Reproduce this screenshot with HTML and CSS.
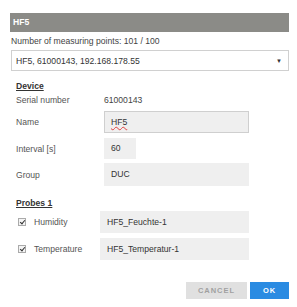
FILE: index.html
```html
<!DOCTYPE html>
<html lang="en">

<head>
    <meta charset="UTF-8">
    <title>HF5</title>
    <link rel="stylesheet" href="styles.css">
</head>

<body>
    <div class="dialog">
        <div class="title">HF5</div>
        <div class="count">Number of measuring points: 101 / 100</div>

        <div class="select">
            <span>HF5, 61000143, 192.168.178.55</span>
            <span class="arrow">&#9660;</span>
        </div>

        <div class="section">
            <h3>Device</h3>
            <div class="row plain">
                <label>Serial number</label>
                <span class="value">61000143</span>
            </div>
            <div class="row name">
                <label>Name</label>
                <div class="field bordered"><span class="spell">HF5</span></div>
            </div>
            <div class="row interval">
                <label>Interval [s]</label>
                <div class="field short">60</div>
            </div>
            <div class="row group">
                <label>Group</label>
                <div class="field">DUC</div>
            </div>

            <h3 class="probes">Probes 1</h3>
            <div class="probe">
                <span class="check"></span>
                <label>Humidity</label>
                <div class="field">HF5_Feuchte-1</div>
            </div>
            <div class="probe">
                <span class="check"></span>
                <label>Temperature</label>
                <div class="field">HF5_Temperatur-1</div>
            </div>
        </div>

        <div class="buttons">
            <button class="cancel">CANCEL</button>
            <button class="ok">OK</button>
        </div>
    </div>
</body>

</html>
```

FILE: styles.css
```css
body {
    margin: 0;
    padding: 13px 0 0 10px;
    font-family: "Liberation Sans", Arial, sans-serif;
    font-size: 8.6px;
    color: #333;
    background: white;
}

.dialog {
    width: 279px;
}

.title {
    height: 19px;
    line-height: 19px;
    background: #8b8b87;
    color: white;
    font-weight: bold;
    padding-left: 3px;
}

.count {
    margin-left: 1px;
    height: 18px;
    line-height: 18px;
    color: #444;
}

.select {
    margin-left: 1px;
    height: 19px;
    border: 1px solid #d0d0d0;
    display: flex;
    align-items: center;
    justify-content: space-between;
    padding: 0 6px 0 4px;
}

.arrow {
    font-size: 6px;
}

.section {
    padding-left: 6px;
}

h3 {
    margin: 9px 0 0 0;
    font-size: 8.6px;
    font-weight: bold;
    text-decoration: underline;
    color: #333;
    height: 13px;
    line-height: 13px;
}

.row {
    display: flex;
    align-items: center;
}

.row.plain {
    height: 14px;
}

.row.name {
    margin-top: 4px;
}

.row.interval {
    margin-top: 5px;
}

.row.group {
    margin-top: 4px;
}

.row label {
    width: 88px;
    color: #555;
}

.value {
    color: #444;
}

.field {
    box-sizing: border-box;
    width: 145px;
    height: 23px;
    line-height: 23px;
    padding-left: 7px;
    background: #efefef;
    color: #333;
}

.field.bordered {
    border: 1px solid #cfcfcf;
    height: 22px;
    line-height: 20px;
    padding-left: 6px;
}

.field.short {
    width: 32px;
    height: 21px;
    line-height: 21px;
}

.spell {
    text-decoration: underline wavy #e04040;
    text-decoration-thickness: 1px;
}

.probes {
    margin-top: 11px;
}

.probe {
    display: flex;
    align-items: center;
    margin-top: 1px;
}

.probe + .probe {
    margin-top: 5px;
}

.check {
    box-sizing: border-box;
    width: 8px;
    height: 8px;
    margin-left: 2px;
    border: 1px solid #aaa;
    background: #f4f4f4;
    position: relative;
}

.check::after {
    content: "";
    position: absolute;
    left: 1.5px;
    top: 0;
    width: 2px;
    height: 4px;
    border: solid #333;
    border-width: 0 1.5px 1.5px 0;
    transform: rotate(40deg);
}

.probe label {
    width: 66px;
    margin-left: 8px;
    color: #555;
}

.probe .field {
    width: 149px;
    height: 22px;
    line-height: 22px;
}

.buttons {
    display: flex;
    justify-content: flex-end;
    gap: 3px;
    margin-top: 22px;
}

button {
    height: 17px;
    border: none;
    font-family: "Liberation Sans", Arial, sans-serif;
    font-size: 7.5px;
    font-weight: bold;
    letter-spacing: 1px;
    padding: 0;
}

.cancel {
    width: 61px;
    background: #e0e0e0;
    color: #a0a0a0;
}

.ok {
    width: 39px;
    background: #2a8be2;
    color: white;
}
```
